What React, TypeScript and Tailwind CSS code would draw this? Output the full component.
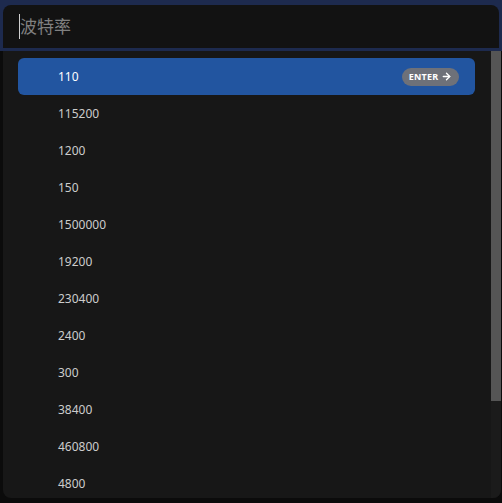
import { ArrowRight } from 'lucide-react';

const rates = [
  '110',
  '115200',
  '1200',
  '150',
  '1500000',
  '19200',
  '230400',
  '2400',
  '300',
  '38400',
  '460800',
  '4800',
];

export default function App() {
  return (
    <div className="h-[503px] w-[502px] overflow-hidden bg-[#0b0b0b] font-['Noto_Sans','Noto_Sans_CJK_SC',sans-serif]">
      {/* search input with focus ring */}
      <div className="h-[51px] border-[3px] border-t-[5px] border-[#1d2a4e] bg-[#1d2a4e]">
        <div className="flex h-full items-center rounded-t-lg bg-[#121212] pl-4">
          <span className="h-[25px] w-px bg-[#d0d0d0]"></span>
          <span className="text-[17px] leading-none text-[#808080]">波特率</span>
        </div>
      </div>

      {/* options */}
      <div className="relative ml-[3px] mr-px h-[447px] overflow-hidden rounded-b-lg bg-[#171717]">
        <div className="flex flex-col pt-[7px] pl-[15px] pr-[26px]">
          {rates.map((r, i) => (
            <div
              key={r}
              className={`flex h-[37px] shrink-0 items-center rounded-md pl-10 pr-4 text-[12px] ${
                i === 0 ? 'bg-[#2255a0] text-white' : 'text-[#cccccc]'
              }`}
            >
              <span className="flex-1">{r}</span>
              {i === 0 && (
                <span className="flex h-[18px] w-[57px] items-center justify-center gap-[3px] rounded-full bg-[#6e7179] text-[9px] font-bold leading-none tracking-wide text-white">
                  ENTER
                  <ArrowRight className="h-[11px] w-[11px]" strokeWidth={3} />
                </span>
              )}
            </div>
          ))}
        </div>

        {/* scrollbar */}
        <div className="absolute right-0 top-0 h-full w-[10px] bg-[#1b1b1b]">
          <div className="h-[350px] w-full bg-[#555555]"></div>
        </div>
      </div>
    </div>
  );
}
